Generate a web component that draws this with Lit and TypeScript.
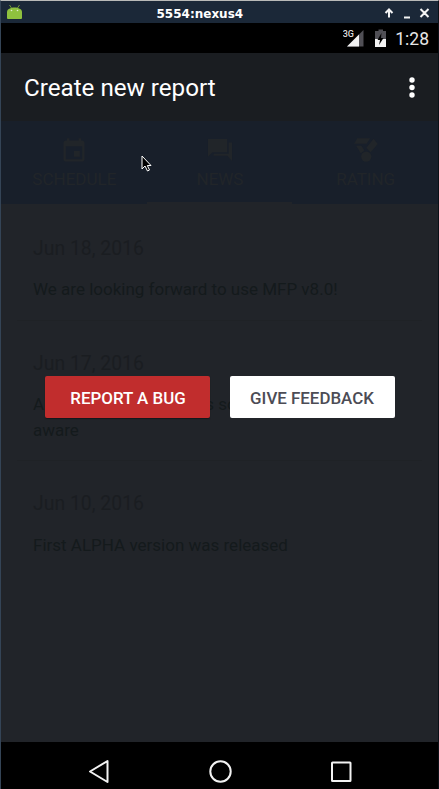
import { LitElement, html, css, svg } from "lit";
import { customElement } from "lit/decorators.js";

const news = [
  { date: "Jun 18, 2016", lines: ["We are looking forward to use MFP v8.0!"] },
  { date: "Jun 17, 2016", lines: ["ALPHA version now has some issues to be", "aware"] },
  { date: "Jun 10, 2016", lines: ["First ALPHA version was released"] },
];

const calendarIcon = svg`<path fill-rule="evenodd" d="M17 12h-5v5h5v-5zM16 1v2H8V1H6v2H5c-1.1 0-2 .9-2 2v14c0 1.1.9 2 2 2h14c1.100 0 2-.9 2-2V5c0-1.100-.9-2-2-2h-1V1h-2zm3 18H5V8h14v11z"/>`;
const forumIcon = svg`<path d="M1.700 1.700h16.500v11.300H5.500L1.700 17zM19.500 4.800h2.800v15.700l-4-4.500H6.500v-1.700h13z"/>`;
const medalIcon = svg`<path d="M4.500 1h11.100l-3.100 4.800H1.800zM3.500 7.500H8l2.700 4-3.200 2.500zM18.500 1.400 22 6l-6 7-3.800-3.500z"/><circle cx="12.200" cy="16.800" r="4.400"/>`;

const tabs = [
  { label: "SCHEDULE", icon: calendarIcon, active: false },
  { label: "NEWS", icon: forumIcon, active: true },
  { label: "RATING", icon: medalIcon, active: false },
];

@customElement("app-root")
export class AppRoot extends LitElement {
  static styles = css`
    :host {
      display: flex;
      flex-direction: column;
      position: relative;
      box-sizing: border-box;
      width: 439px;
      height: 789px;
      overflow: hidden;
      background: #212429;
      border-left: 1.500px solid #344456;
      border-right: 1px solid #0c1017;
      border-top: 1px solid #b9bab8;
      font-family: Roboto, sans-serif;
    }
    svg { display: block; flex: none; }
    .window {
      height: 22px;
      flex: none;
      display: grid;
      grid-template-columns: 155.500px 1fr auto;
      align-items: center;
      background: #1b2838;
      color: #fff;
      font: bold 12px "DejaVu Sans", sans-serif;
      padding: 0 8px 0 0;
    }
    .robot { margin-left: 5px; }
    .title { padding-top: 4px; }
    .controls { margin-top: 2px; }
    .status {
      height: 30px;
      flex: none;
      background: #000;
      display: flex;
      align-items: center;
      justify-content: flex-end;
      padding-right: 9px;
      color: #e6e6e6;
      font-size: 17.500px;
    }
    .clock { margin-left: 8px; padding-top: 2px; }
    .bar {
      height: 68px;
      flex: none;
      box-sizing: border-box;
      background: #1a1d21;
      display: flex;
      align-items: center;
      justify-content: space-between;
      padding: 1px 22.500px 0 23px;
      color: #fff;
      font-size: 24.200px;
    }
    .tabs {
      height: 83px;
      flex: none;
      display: grid;
      grid-template-columns: 1fr 1fr 1fr;
      background: #181f2a;
      color: #212529;
      font-size: 17px;
    }
    .tab {
      box-sizing: border-box;
      display: flex;
      flex-direction: column;
      align-items: center;
      gap: 4px;
      padding: 16px 0 0 1px;
      border-bottom: 1px solid transparent;
    }
    .active { border-bottom: 2px solid #212429; }
    .list { flex: 1; padding: 1.500px 16px 0; }
    .item {
      box-sizing: border-box;
      padding: 31px 16px 17px;
      border-bottom: 1px solid #1f2226;
    }
    .item:last-child { border-bottom: none; }
    .date {
      font-size: 19.400px;
      line-height: 24px;
      color: #1a1d21;
      margin-bottom: 16.500px;
    }
    .text {
      font-size: 17px;
      line-height: 25.500px;
      color: #141a1c;
      white-space: nowrap;
    }
    .nav {
      height: 47px;
      flex: none;
      box-sizing: border-box;
      padding: 16.500px 0 0 85.500px;
      display: flex;
      gap: 96px;
      background: #000;
    }
    .actions {
      position: absolute;
      left: 43.500px;
      top: 375px;
      display: flex;
      gap: 20px;
    }
    .btn {
      width: 165px;
      height: 42px;
      padding: 2px 0 0;
      border: 0;
      border-radius: 2px;
      font: 500 16.900px Roboto, sans-serif;
      background: #fff;
      color: #4c4c55;
    }
    .danger { background: #c12d2d; color: #fff; box-shadow: 0 1px 1px #15181b; padding-left: 2px; }
    .cursor { position: absolute; left: 139.500px; top: 154px; }
  `;

  render() {
    return html`
      <header class="window">
        <svg class="robot" width="17" height="15" viewBox="0 0 17 15">
          <path d="M3.500 0l2 3M13.500 0l-2 3" stroke="#6f9638" />
          <path d="M1 13V7c0-6 15-6 15 0v6q0 1-1 1H2q-1 0-1-1z" fill="#8fc13e" />
          <circle cx="5.500" cy="5.500" r=".8" fill="#e4efd0" />
          <circle cx="11.500" cy="5.500" r=".8" fill="#e4efd0" />
        </svg>
        <span class="title">5554:nexus4</span>
        <svg class="controls" width="47" height="12" viewBox="0 0 47 12" fill="none" stroke="#f4f4f4" stroke-width="2">
          <path d="M6 10.500V3M2.500 6 6 2.500 9.500 6M21 10.500h6M37.500 2l8 8M45.500 2l-8 8" />
        </svg>
      </header>
      <div class="status">
        <svg width="44" height="19" viewBox="0 0 44 19">
          <text x="-.2" y="7.500" font-size="9" font-weight="500" fill="#ddd" textLength="11">3G</text>
          <path d="M4 17.500 20.500 1v16.500z" fill="#504f55" />
          <path d="M4 17.500 16 5.500v12z" fill="#f2f2f2" />
          <path d="M32 2h3.500V.5h4.500V2h3v16H32z" fill="#504f55" />
          <path d="M32 10h11v8H32z" fill="#f2f2f2" />
          <path d="M38.500 4 34.500 11h2.500l-1 5 4.500-7H38z" fill="#000" />
        </svg>
        <span class="clock">1:28</span>
      </div>
      <div class="bar">
        <span>Create new report</span>
        <svg width="8" height="24" viewBox="0 0 8 24" fill="#fff">
          <circle cx="4" cy="4" r="2.700" /><circle cx="4" cy="11.500" r="2.700" /><circle cx="4" cy="19" r="2.700" />
        </svg>
      </div>
      <nav class="tabs">
        ${tabs.map(
          (t) => html`<div class="tab ${t.active ? "active" : ""}">
            <svg width="28" height="28" viewBox="0 0 24 24" fill="#212529">${t.icon}</svg>
            <span>${t.label}</span>
          </div>`
        )}
      </nav>
      <main class="list">
        ${news.map(
          (n) => html`<article class="item">
            <div class="date">${n.date}</div>
            ${n.lines.map((l) => html`<div class="text">${l}</div>`)}
          </article>`
        )}
      </main>
      <footer class="nav">
        ${[
          svg`<path d="M3 12.500 20.500 2v21z" />`,
          svg`<circle cx="12.500" cy="12.500" r="10.200" />`,
          svg`<rect x="3" y="3.500" width="18.500" height="18.500" rx=".5" />`,
        ].map(
          (s) => html`<svg width="25" height="25" viewBox="0 0 25 25" fill="none" stroke="#f2f2f2" stroke-width="2" stroke-linejoin="round">${s}</svg>`
        )}
      </footer>
      <div class="actions">
        <button class="btn danger">REPORT A BUG</button>
        <button class="btn">GIVE FEEDBACK</button>
      </div>
      <svg class="cursor" width="12" height="18" viewBox="0 0 12 18">
        <path d="M1 1v13l3-3 2.500 5 2-1-2.200-4.500H10z" fill="#000" stroke="#fff" />
      </svg>
    `;
  }
}
